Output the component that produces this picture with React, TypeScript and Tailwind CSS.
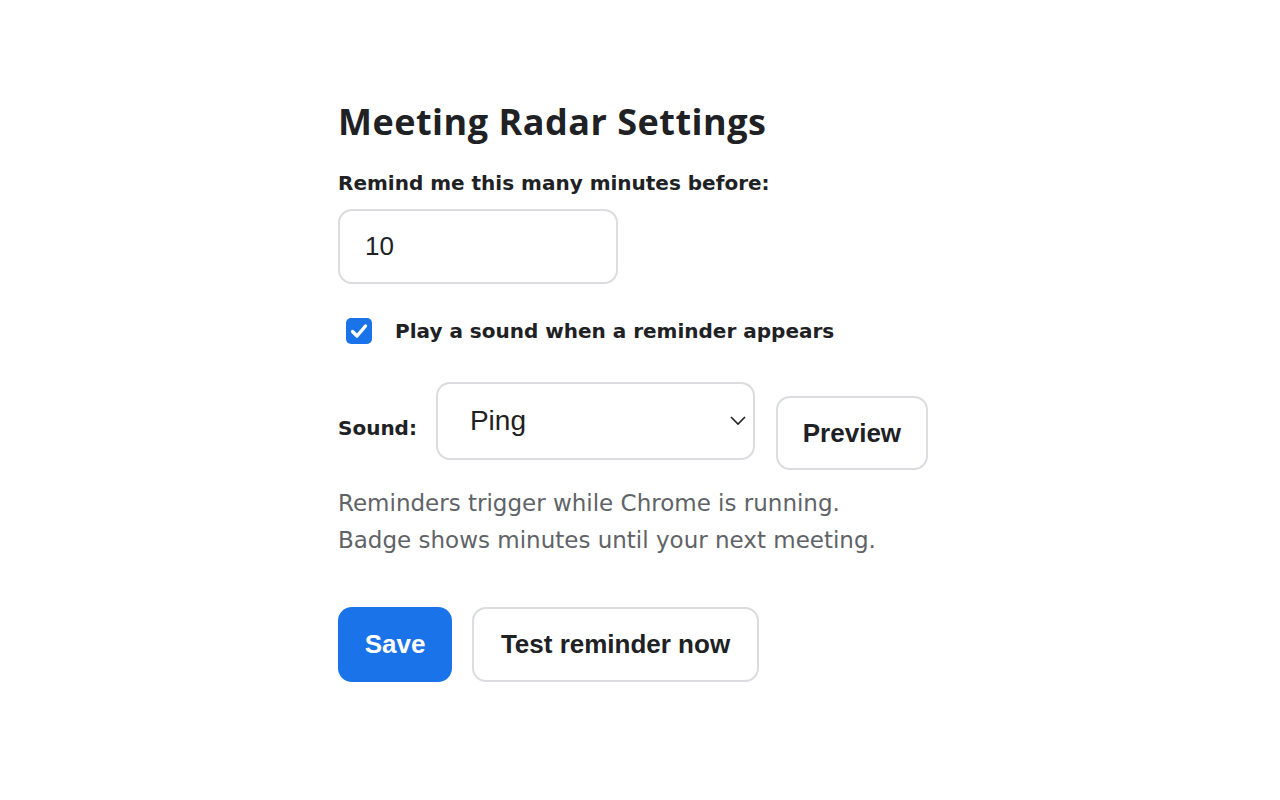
import { useState } from "react";

const bodyFont = { fontFamily: '"DejaVu Sans", "Open Sans", sans-serif' };
const titleFont = { fontFamily: '"Open Sans", "DejaVu Sans", sans-serif' };
const controlFont = { fontFamily: '"Liberation Sans", Arial, sans-serif' };

function CheckBox({ checked, onChange }: { checked: boolean; onChange: (v: boolean) => void }) {
  return (
    <button
      type="button"
      onClick={() => onChange(!checked)}
      className={
        "w-[26px] h-[26px] rounded-[5px] flex items-center justify-center " +
        (checked ? "bg-[#1a73e8]" : "bg-white border-2 border-[#767676]")
      }
    >
      {checked && (
        <svg width="20" height="20" viewBox="0 0 20 20" fill="none">
          <path d="M3.5 10.5 L8 15 L16.5 5" stroke="white" strokeWidth="3.4" strokeLinecap="round" strokeLinejoin="round" />
        </svg>
      )}
    </button>
  );
}

export default function App() {
  const [minutes, setMinutes] = useState("10");
  const [playSound, setPlaySound] = useState(true);
  const [sound, setSound] = useState("Ping");

  return (
    <div className="min-h-[800px] bg-white text-[#202124]" style={bodyFont}>
      <div className="w-[604px] mx-auto pt-[98px] flex flex-col">
        <h1 className="text-[36px] font-bold leading-[48px] tracking-[0.5px]" style={titleFont}>
          Meeting Radar Settings
        </h1>

        <label className="mt-[23px] text-[20px] font-bold leading-[28px]">Remind me this many minutes before:</label>
        <input
          value={minutes}
          onChange={(e) => setMinutes(e.target.value)}
          className="mt-[12px] w-[280px] h-[75px] rounded-[14px] border-2 border-[#dadce0] px-[25px] text-[26px] outline-none"
          style={controlFont}
        />

        <div className="mt-[33px] flex items-center gap-[23px] pl-[8px]">
          <CheckBox checked={playSound} onChange={setPlaySound} />
          <span className="text-[20px] font-bold leading-[28px]">Play a sound when a reminder appears</span>
        </div>

        <div className="mt-[37px] flex items-start">
          <span className="mt-[32px] text-[20px] font-bold leading-[28px]">Sound:</span>
          <div className="relative ml-[19px]">
            <select
              value={sound}
              onChange={(e) => setSound(e.target.value)}
              className="appearance-none w-[319px] h-[78px] rounded-[14px] border-2 border-[#dadce0] bg-white pl-[32px] text-[28px] outline-none"
              style={controlFont}
            >
              <option>Ping</option>
              <option>Chime</option>
              <option>Bell</option>
            </select>
            <svg
              className="absolute right-[8px] top-[31px] pointer-events-none"
              width="18"
              height="14"
              viewBox="0 0 18 14"
              fill="none"
            >
              <path d="M2 4 L9 11 L16 4" stroke="#202124" strokeWidth="1.6" />
            </svg>
          </div>
          <button
            className="ml-[21px] mt-[14px] w-[152px] h-[74px] rounded-[14px] border-2 border-[#dadce0] bg-white text-[26px] font-bold"
            style={controlFont}
          >
            Preview
          </button>
        </div>

        <p className="mt-[15px] text-[23px] leading-[37px] text-[#5f6368]">
          Reminders trigger while Chrome is running.
          <br />
          Badge shows minutes until your next meeting.
        </p>

        <div className="mt-[48px] flex gap-[20px]" style={controlFont}>
          <button className="w-[114px] h-[75px] rounded-[14px] bg-[#1a73e8] text-white text-[26px] font-bold">
            Save
          </button>
          <button className="w-[287px] h-[75px] rounded-[14px] border-2 border-[#dadce0] bg-white text-[26px] font-bold">
            Test reminder now
          </button>
        </div>
      </div>
    </div>
  );
}
